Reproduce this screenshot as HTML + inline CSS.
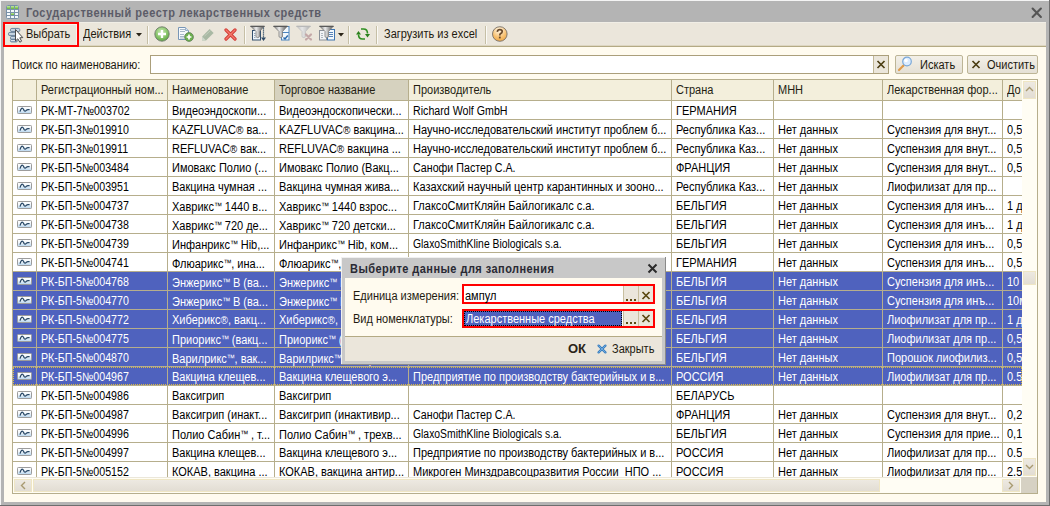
<!DOCTYPE html>
<html><head><meta charset="utf-8"><title>Реестр</title>
<style>
html,body{margin:0;padding:0;}
body{width:1050px;height:506px;overflow:hidden;position:relative;font-family:"Liberation Sans", sans-serif;font-size:11px;}
div{position:absolute;}
.t{white-space:nowrap;line-height:13px;font-size:12px;transform:scaleX(0.9167);transform-origin:0 0;}
.tb{white-space:nowrap;}
.tm{font-size:9px;letter-spacing:-0.6px;vertical-align:2px;}
.rg{font-size:11px;}
svg{display:block}
</style></head><body>
<div style="left:0px;top:0px;width:1050px;height:506px;background:#b4b4b4"></div>
<div style="left:0px;top:0px;width:1050px;height:1px;background:#f4f4f4"></div>
<div style="left:0px;top:0px;width:1px;height:506px;background:#f4f4f4"></div>
<div style="left:1049px;top:0px;width:1px;height:506px;background:#6e6e6e"></div>
<div style="left:0px;top:505px;width:1050px;height:1px;background:#6e6e6e"></div>
<svg style="position:absolute;left:6px;top:5px" width="13" height="14" viewBox="0 0 13 14">
<defs><linearGradient id="tg" x1="0" y1="0" x2="0" y2="1"><stop offset="0" stop-color="#c4eaa0"/><stop offset="1" stop-color="#66b436"/></linearGradient></defs>
<rect x="0.5" y="0.5" width="12" height="13" rx="1" fill="#f4f8fc" stroke="#7890a8"/>
<rect x="1" y="1" width="11" height="3" fill="url(#tg)"/>
<rect x="5" y="8" width="3" height="2" fill="url(#tg)"/>
<g stroke="#7a92aa" stroke-width="1"><line x1="1" y1="4.5" x2="12" y2="4.5"/><line x1="1" y1="7.5" x2="12" y2="7.5"/><line x1="1" y1="10.5" x2="12" y2="10.5"/>
<line x1="4.5" y1="1" x2="4.5" y2="13"/><line x1="8.5" y1="1" x2="8.5" y2="13"/></g>
</svg>
<div class="tb" style="left:26px;top:6px;font-weight:bold;font-size:11px;letter-spacing:0.53px;color:#5c5c68;line-height:14px;transform:scaleY(1.1);transform-origin:0 11px">Государственный реестр лекарственных средств</div>
<svg style="position:absolute;left:1031px;top:7px" width="12" height="12" viewBox="0 0 12 12"><path d="M1.6 1.6 L9.9 9.9 M9.9 1.6 L1.6 9.9" stroke="#555555" stroke-width="2.1" stroke-linecap="round"/></svg>
<div style="left:4px;top:22px;width:1042px;height:24px;background:#ebe6db"></div>
<div style="left:4px;top:22px;width:1042px;height:1px;background:#f1eee6"></div>
<div style="left:4px;top:45px;width:1042px;height:1px;background:#ddd6c2"></div>
<div style="left:4px;top:46px;width:1042px;height:1px;background:#b4aa84"></div>
<div style="left:4px;top:47px;width:1042px;height:455px;background:#fffbef"></div>
<div style="left:3px;top:22px;width:76px;height:25px;border:2px solid #ff0000;box-sizing:border-box"></div>
<div style="left:5px;top:24px;width:72px;height:1px;background:#f6f8f0"></div>
<div style="left:76px;top:24px;width:1px;height:21px;background:#f6f4ec"></div>
<svg style="position:absolute;left:4px;top:24px" width="24" height="22" viewBox="0 0 24 22">
<defs><linearGradient id="bar" x1="0" y1="0" x2="0" y2="1"><stop offset="0" stop-color="#7f9cb8"/><stop offset="0.5" stop-color="#e6eff7"/><stop offset="1" stop-color="#6f8ca8"/></linearGradient></defs>
<g fill="url(#bar)" stroke="#5d7a96" stroke-width="0.8">
<rect x="6.4" y="4.4" width="9.5" height="3.2" rx="1.5"/>
<rect x="4.4" y="8.4" width="9" height="3.2" rx="1.5"/>
<rect x="6.4" y="12.4" width="7" height="3" rx="1.4"/>
<rect x="6.4" y="15.4" width="7" height="2.6" rx="1.3"/>
</g>
<path d="M11.5 5.5 L11.5 17 L13.8 14.8 L15.8 18.2 L17.6 17.2 L15.8 13.8 L18.8 13.6 Z" fill="#ffffff" stroke="#4a4a4a" stroke-width="1" stroke-linejoin="round"/>
</svg>
<div class="t" style="left:26px;top:28px;color:#1e1a10">Выбрать</div>
<div class="t" style="left:83px;top:28px;color:#1e1a10">Действия</div>
<svg style="position:absolute;left:136px;top:33px" width="6" height="4"><path d="M0 0 L6 0 L3 3.5 Z" fill="#2a2418"/></svg>
<div style="left:147px;top:26px;width:1px;height:18px;background:#c6bfa6"></div>
<div style="left:148px;top:26px;width:1px;height:18px;background:#fbfaf6"></div>
<svg style="position:absolute;left:154px;top:26px" width="16" height="16" viewBox="0 0 16 16">
<defs><radialGradient id="gp" cx="0.45" cy="0.35" r="0.75"><stop offset="0" stop-color="#c9eab4"/><stop offset="0.55" stop-color="#88c56a"/><stop offset="1" stop-color="#4f9a36"/></radialGradient></defs>
<circle cx="8" cy="8" r="7.2" fill="url(#gp)" stroke="#6e7a6c" stroke-width="0.9"/>
<path d="M8 4 V12 M4 8 H12" stroke="#ffffff" stroke-width="2.3"/>
</svg>
<svg style="position:absolute;left:178px;top:27px" width="16" height="15" viewBox="0 0 16 15">
<path d="M0.5 0.5 H7.5 L10.5 3.5 V12.5 H0.5 Z" fill="#f6f9fc" stroke="#7896b6"/>
<path d="M7.5 0.5 V3.5 H10.5" fill="#d6e2ee" stroke="#9ab0c8"/>
<g stroke="#a8b8c8"><line x1="2" y1="2.5" x2="7" y2="2.5"/><line x1="2" y1="4.5" x2="7" y2="4.5"/><line x1="2" y1="7.5" x2="6" y2="7.5"/><line x1="2" y1="9.5" x2="6" y2="9.5"/><line x1="2" y1="11" x2="6" y2="11"/></g>
<circle cx="11" cy="10" r="4.4" fill="#6cb04e" stroke="#5f7f58" stroke-width="0.8"/>
<path d="M11 7.6 V12.4 M8.6 10 H13.4" stroke="#fff" stroke-width="1.7"/>
</svg>
<svg style="position:absolute;left:201px;top:27px" width="14" height="15" viewBox="0 0 14 15">
<path d="M1 13.5 L1.2 9.5 L8.6 2 L12.6 6 L5 13.5 Z" fill="#a9b9a4"/>
<path d="M1 13.5 L1.2 9.5 L5 13.5 Z" fill="#cfd8cc"/>
<path d="M3.5 9 L9.5 3.5" stroke="#c2cebe" stroke-width="1"/>
</svg>
<svg style="position:absolute;left:224px;top:28px" width="13" height="13" viewBox="0 0 13 13">
<path d="M2 2 L11 11 M11 2 L2 11" stroke="#d23a34" stroke-width="3.2" stroke-linecap="round"/>
<path d="M2 2 L11 11 M11 2 L2 11" stroke="#f37a6c" stroke-width="1.4" stroke-linecap="round"/>
</svg>
<div style="left:244px;top:26px;width:1px;height:18px;background:#c6bfa6"></div>
<div style="left:245px;top:26px;width:1px;height:18px;background:#fbfaf6"></div>
<svg style="position:absolute;left:248px;top:24px" width="22" height="20" viewBox="0 0 22 20">
<rect x="4.5" y="6.5" width="8" height="9.5" fill="#eef5fb" stroke="#34506e"/>
<g fill="#9aa8b8"><rect x="6" y="9" width="1.5" height="1"/><rect x="6" y="11" width="1.5" height="1"/><rect x="6" y="13" width="1.5" height="1"/></g>
<defs><linearGradient id="fg1" x1="0" y1="0" x2="1" y2="0"><stop offset="0" stop-color="#6a6a6a"/><stop offset="0.4" stop-color="#ececec"/><stop offset="0.65" stop-color="#a8a8a8"/><stop offset="1" stop-color="#505050"/></linearGradient></defs>
<path d="M2.5 2 H16.5 L11.5 7.5 V12.8 Q9.75 14.5 8.0 12.8 V7.5 Z" fill="url(#fg1)" stroke="#7a7a7a" stroke-width="0.8"/>
<path d="M2.5 2.5 H16.5" stroke="#5a5a5a" stroke-width="1"/>
<path d="M15.5 3.5 V14" stroke="#2e4a66" stroke-width="1.2" stroke-dasharray="1.2 0.8"/>
<path d="M13 13.5 H18 L15.5 17 Z" fill="#2e4a66"/>
</svg>
<svg style="position:absolute;left:271px;top:24px" width="22" height="20" viewBox="0 0 22 20">
<rect x="10.5" y="2.5" width="7.5" height="13.5" fill="#f2f8fd" stroke="#4a84c0"/>
<path d="M11 8.5 H18" stroke="#4a84c0"/>
<defs><linearGradient id="fg2" x1="0" y1="0" x2="1" y2="0"><stop offset="0" stop-color="#6a6a6a"/><stop offset="0.4" stop-color="#ececec"/><stop offset="0.65" stop-color="#a8a8a8"/><stop offset="1" stop-color="#505050"/></linearGradient></defs>
<path d="M2.5 2 H16.5 L11.5 7.5 V12.8 Q9.75 14.5 8.0 12.8 V7.5 Z" fill="url(#fg2)" stroke="#7a7a7a" stroke-width="0.8"/>
<path d="M2.5 2.5 H16.5" stroke="#5a5a5a" stroke-width="1"/>
<path d="M12.5 13.5 L14 15 L16.8 11.5" stroke="#2a6aae" stroke-width="1.5" fill="none"/>
</svg>
<svg style="position:absolute;left:294px;top:24px" width="22" height="20" viewBox="0 0 22 20">
<defs><linearGradient id="fg3" x1="0" y1="0" x2="1" y2="0"><stop offset="0" stop-color="#c0c0c0"/><stop offset="0.4" stop-color="#e6e6e6"/><stop offset="0.65" stop-color="#d0d0d0"/><stop offset="1" stop-color="#a8a8a8"/></linearGradient></defs>
<path d="M2.5 2 H16.5 L11.5 7.5 V12.8 Q9.75 14.5 8.0 12.8 V7.5 Z" fill="url(#fg3)" stroke="#c0c0c0" stroke-width="0.8"/>
<path d="M2.5 2.5 H16.5" stroke="#b8b8b8" stroke-width="1"/>
<path d="M12 10.5 L17 15.5 M17 10.5 L12 15.5" stroke="#c4a8a8" stroke-width="2.2" stroke-linecap="round"/>
</svg>
<svg style="position:absolute;left:317px;top:24px" width="22" height="20" viewBox="0 0 22 20">
<rect x="2.5" y="6.5" width="7" height="9.5" fill="#f2f4f6" stroke="#8a9098"/>
<g fill="#b0b8c0"><rect x="4" y="9" width="2" height="1"/><rect x="4" y="11" width="2" height="1"/><rect x="4" y="13" width="2" height="1"/></g>
<rect x="10.5" y="5.5" width="7" height="10.5" fill="#f2f8fd" stroke="#3e74b0"/>
<g fill="#5a84b8"><rect x="12" y="8" width="4" height="1"/><rect x="12" y="10" width="4" height="1"/><rect x="12" y="12" width="4" height="1"/></g>
<defs><linearGradient id="fg4" x1="0" y1="0" x2="1" y2="0"><stop offset="0" stop-color="#6a6a6a"/><stop offset="0.4" stop-color="#ececec"/><stop offset="0.65" stop-color="#a8a8a8"/><stop offset="1" stop-color="#505050"/></linearGradient></defs>
<path d="M2.5 2 H16.5 L11.5 7.5 V12.8 Q9.75 14.5 8.0 12.8 V7.5 Z" fill="url(#fg4)" stroke="#7a7a7a" stroke-width="0.8"/>
<path d="M2.5 2.5 H16.5" stroke="#5a5a5a" stroke-width="1"/>
</svg>
<svg style="position:absolute;left:338px;top:33px" width="6" height="4"><path d="M0 0 L6 0 L3 3.5 Z" fill="#2a2418"/></svg>
<div style="left:348px;top:26px;width:1px;height:18px;background:#c6bfa6"></div>
<div style="left:349px;top:26px;width:1px;height:18px;background:#fbfaf6"></div>
<svg style="position:absolute;left:354px;top:27px" width="18" height="15" viewBox="0 0 18 15">
<path d="M7 2 H9.5 Q13.5 2 13.5 6.5" stroke="#2f8f22" stroke-width="1.6" fill="none"/>
<path d="M11 7 H16 L13.5 10.5 Z" fill="#2a7f1c"/>
<path d="M11 12 H8.5 Q4.5 12 4.5 7.5" stroke="#2f8f22" stroke-width="1.6" fill="none"/>
<path d="M2 7.5 H7 L4.5 4 Z" fill="#2a7f1c"/>
</svg>
<div style="left:376px;top:26px;width:1px;height:18px;background:#c6bfa6"></div>
<div style="left:377px;top:26px;width:1px;height:18px;background:#fbfaf6"></div>
<div class="t" style="left:384px;top:28px;color:#1e1a10">Загрузить из excel</div>
<div style="left:485px;top:26px;width:1px;height:18px;background:#c6bfa6"></div>
<div style="left:486px;top:26px;width:1px;height:18px;background:#fbfaf6"></div>
<svg style="position:absolute;left:491px;top:26px" width="17" height="16" viewBox="0 0 17 16">
<defs><radialGradient id="hg" cx="0.45" cy="0.25" r="0.8"><stop offset="0" stop-color="#fff8ea"/><stop offset="0.6" stop-color="#f8c272"/><stop offset="1" stop-color="#eba444"/></radialGradient></defs>
<circle cx="8.8" cy="8" r="7.3" fill="url(#hg)" stroke="#77706a" stroke-width="0.9"/>
<path d="M6.3 5.8 Q6.5 3.6 8.8 3.6 Q11.2 3.6 11.2 5.6 Q11.2 7 9.6 7.6 Q8.8 8 8.8 9.4" stroke="#6a4a2a" stroke-width="1.7" fill="none"/>
<rect x="7.9" y="10.6" width="1.8" height="1.8" fill="#6a4a2a"/>
</svg>
<div class="t" style="left:12px;top:59px;color:#1e1a10">Поиск по наименованию:</div>
<div style="left:150px;top:55px;width:739px;height:19px;background:#fff;border:1px solid #ab9f7b;box-sizing:border-box"></div>
<div style="left:873px;top:56px;width:15px;height:17px;background:#ebe6db;border-left:1px solid #c1b796;box-sizing:border-box"></div>
<svg style="position:absolute;left:876px;top:60px" width="10" height="9" viewBox="0 0 10 9"><path d="M1.5 1 L8.5 8 M8.5 1 L1.5 8" stroke="#4c3e14" stroke-width="1.7"/></svg>
<div style="left:895px;top:55px;width:68px;height:19px;border:1px solid #bdb596;border-radius:2px;box-sizing:border-box;background:linear-gradient(#f3f0e8,#e5e0d5)"></div>
<svg style="position:absolute;left:897px;top:56px" width="16" height="16" viewBox="0 0 16 16">
<path d="M2 14 L6.5 9.5" stroke="#e09a4a" stroke-width="2.2" stroke-linecap="round"/>
<circle cx="10" cy="5.5" r="4.3" fill="#dcecff" stroke="#7aa8d8" stroke-width="1.2"/>
<circle cx="9" cy="4.5" r="1.8" fill="#ffffff"/>
</svg>
<div class="t" style="left:920px;top:59px;color:#1e1a10">Искать</div>
<div style="left:967px;top:55px;width:71px;height:19px;border:1px solid #bdb596;border-radius:2px;box-sizing:border-box;background:linear-gradient(#f3f0e8,#e5e0d5)"></div>
<svg style="position:absolute;left:971px;top:60px" width="10" height="9" viewBox="0 0 10 9"><path d="M1.5 1 L8.5 8 M8.5 1 L1.5 8" stroke="#4c3e14" stroke-width="1.7"/></svg>
<div class="t" style="left:987px;top:59px;color:#1e1a10">Очистить</div>
<div style="left:12px;top:79px;width:1026px;height:415px;background:#fffdf4"></div>
<div style="left:13px;top:80px;width:1009px;height:20px;background:#f3efdc"></div>
<div style="left:275px;top:80px;width:133px;height:20px;background:#d6d2bf"></div>
<div style="left:13px;top:101px;width:1009px;height:376px;overflow:hidden">
<div style="left:0px;top:0px;width:1009px;height:18px;background:#ffffff"></div>
<svg style="position:absolute;left:4px;top:5px" width="15" height="8" viewBox="0 0 15 8">
<defs><linearGradient id="ig0" x1="0" y1="0" x2="0" y2="1"><stop offset="0" stop-color="#ffffff"/><stop offset="0.45" stop-color="#f0f6fb"/><stop offset="1" stop-color="#b4d4ee"/></linearGradient></defs>
<rect x="0.5" y="0.5" width="14" height="7" rx="0.8" fill="url(#ig0)" stroke="#9c9c9c"/>
<path d="M3 5.6 Q4.4 1.2 5.8 2.4 Q6.4 3 7.2 4.6 Q8 5.7 9.3 4.4 Q10 3.6 11 3.6 H12.6" stroke="#274766" stroke-width="1.3" fill="none"/>
</svg>
<div class="t" style="left:28px;top:4px;color:#000000;transform:scaleX(0.887)">РК-МТ-7№003702</div>
<div class="t" style="left:159px;top:4px;color:#000000">Видеоэндоскопи...</div>
<div class="t" style="left:266px;top:4px;color:#000000">Видеоэндоскопически...</div>
<div class="t" style="left:400px;top:4px;color:#000000;transform:scaleX(0.888)">Richard Wolf GmbH</div>
<div class="t" style="left:663px;top:4px;color:#000000">ГЕРМАНИЯ</div>
<div style="left:0px;top:18px;width:1009px;height:1px;background:#b6ae8c"></div>
<div style="left:0px;top:19px;width:1009px;height:18px;background:#ffffff"></div>
<svg style="position:absolute;left:4px;top:24px" width="15" height="8" viewBox="0 0 15 8">
<defs><linearGradient id="ig1" x1="0" y1="0" x2="0" y2="1"><stop offset="0" stop-color="#ffffff"/><stop offset="0.45" stop-color="#f0f6fb"/><stop offset="1" stop-color="#b4d4ee"/></linearGradient></defs>
<rect x="0.5" y="0.5" width="14" height="7" rx="0.8" fill="url(#ig1)" stroke="#9c9c9c"/>
<path d="M3 5.6 Q4.4 1.2 5.8 2.4 Q6.4 3 7.2 4.6 Q8 5.7 9.3 4.4 Q10 3.6 11 3.6 H12.6" stroke="#274766" stroke-width="1.3" fill="none"/>
</svg>
<div class="t" style="left:28px;top:23px;color:#000000;transform:scaleX(0.887)">РК-БП-3№019910</div>
<div class="t" style="left:159px;top:23px;color:#000000">KAZFLUVAC<span class="rg">®</span> ва...</div>
<div class="t" style="left:266px;top:23px;color:#000000">KAZFLUVAC<span class="rg">®</span> вакцина...</div>
<div class="t" style="left:400px;top:23px;color:#000000">Научно-исследовательский институт проблем б...</div>
<div class="t" style="left:663px;top:23px;color:#000000">Республика Каз...</div>
<div class="t" style="left:765px;top:23px;color:#000000">Нет данных</div>
<div class="t" style="left:874px;top:23px;color:#000000">Суспензия для внут...</div>
<div class="t" style="left:994px;top:23px;color:#000000">0,5</div>
<div style="left:0px;top:37px;width:1009px;height:1px;background:#b6ae8c"></div>
<div style="left:0px;top:38px;width:1009px;height:18px;background:#ffffff"></div>
<svg style="position:absolute;left:4px;top:43px" width="15" height="8" viewBox="0 0 15 8">
<defs><linearGradient id="ig2" x1="0" y1="0" x2="0" y2="1"><stop offset="0" stop-color="#ffffff"/><stop offset="0.45" stop-color="#f0f6fb"/><stop offset="1" stop-color="#b4d4ee"/></linearGradient></defs>
<rect x="0.5" y="0.5" width="14" height="7" rx="0.8" fill="url(#ig2)" stroke="#9c9c9c"/>
<path d="M3 5.6 Q4.4 1.2 5.8 2.4 Q6.4 3 7.2 4.6 Q8 5.7 9.3 4.4 Q10 3.6 11 3.6 H12.6" stroke="#274766" stroke-width="1.3" fill="none"/>
</svg>
<div class="t" style="left:28px;top:42px;color:#000000;transform:scaleX(0.887)">РК-БП-3№019911</div>
<div class="t" style="left:159px;top:42px;color:#000000">REFLUVAC<span class="rg">®</span> вак...</div>
<div class="t" style="left:266px;top:42px;color:#000000">REFLUVAC<span class="rg">®</span> вакцина ...</div>
<div class="t" style="left:400px;top:42px;color:#000000">Научно-исследовательский институт проблем б...</div>
<div class="t" style="left:663px;top:42px;color:#000000">Республика Каз...</div>
<div class="t" style="left:765px;top:42px;color:#000000">Нет данных</div>
<div class="t" style="left:874px;top:42px;color:#000000">Суспензия для внут...</div>
<div class="t" style="left:994px;top:42px;color:#000000">0,5</div>
<div style="left:0px;top:56px;width:1009px;height:1px;background:#b6ae8c"></div>
<div style="left:0px;top:57px;width:1009px;height:18px;background:#ffffff"></div>
<svg style="position:absolute;left:4px;top:62px" width="15" height="8" viewBox="0 0 15 8">
<defs><linearGradient id="ig3" x1="0" y1="0" x2="0" y2="1"><stop offset="0" stop-color="#ffffff"/><stop offset="0.45" stop-color="#f0f6fb"/><stop offset="1" stop-color="#b4d4ee"/></linearGradient></defs>
<rect x="0.5" y="0.5" width="14" height="7" rx="0.8" fill="url(#ig3)" stroke="#9c9c9c"/>
<path d="M3 5.6 Q4.4 1.2 5.8 2.4 Q6.4 3 7.2 4.6 Q8 5.7 9.3 4.4 Q10 3.6 11 3.6 H12.6" stroke="#274766" stroke-width="1.3" fill="none"/>
</svg>
<div class="t" style="left:28px;top:61px;color:#000000;transform:scaleX(0.887)">РК-БП-5№003484</div>
<div class="t" style="left:159px;top:61px;color:#000000">Имовакс Полио (...</div>
<div class="t" style="left:266px;top:61px;color:#000000">Имовакс Полио (Вакц...</div>
<div class="t" style="left:400px;top:61px;color:#000000;transform:scaleX(0.889)">Санофи Пастер С.А.</div>
<div class="t" style="left:663px;top:61px;color:#000000">ФРАНЦИЯ</div>
<div class="t" style="left:765px;top:61px;color:#000000">Нет данных</div>
<div class="t" style="left:874px;top:61px;color:#000000">Суспензия для внут...</div>
<div class="t" style="left:994px;top:61px;color:#000000">0,5</div>
<div style="left:0px;top:75px;width:1009px;height:1px;background:#b6ae8c"></div>
<div style="left:0px;top:76px;width:1009px;height:18px;background:#ffffff"></div>
<svg style="position:absolute;left:4px;top:81px" width="15" height="8" viewBox="0 0 15 8">
<defs><linearGradient id="ig4" x1="0" y1="0" x2="0" y2="1"><stop offset="0" stop-color="#ffffff"/><stop offset="0.45" stop-color="#f0f6fb"/><stop offset="1" stop-color="#b4d4ee"/></linearGradient></defs>
<rect x="0.5" y="0.5" width="14" height="7" rx="0.8" fill="url(#ig4)" stroke="#9c9c9c"/>
<path d="M3 5.6 Q4.4 1.2 5.8 2.4 Q6.4 3 7.2 4.6 Q8 5.7 9.3 4.4 Q10 3.6 11 3.6 H12.6" stroke="#274766" stroke-width="1.3" fill="none"/>
</svg>
<div class="t" style="left:28px;top:80px;color:#000000;transform:scaleX(0.887)">РК-БП-5№003951</div>
<div class="t" style="left:159px;top:80px;color:#000000">Вакцина чумная ...</div>
<div class="t" style="left:266px;top:80px;color:#000000">Вакцина чумная жива...</div>
<div class="t" style="left:400px;top:80px;color:#000000">Казахский научный центр карантинных и зооно...</div>
<div class="t" style="left:663px;top:80px;color:#000000">Республика Каз...</div>
<div class="t" style="left:765px;top:80px;color:#000000">Нет данных</div>
<div class="t" style="left:874px;top:80px;color:#000000">Лиофилизат для пр...</div>
<div style="left:0px;top:94px;width:1009px;height:1px;background:#b6ae8c"></div>
<div style="left:0px;top:95px;width:1009px;height:18px;background:#ffffff"></div>
<svg style="position:absolute;left:4px;top:100px" width="15" height="8" viewBox="0 0 15 8">
<defs><linearGradient id="ig5" x1="0" y1="0" x2="0" y2="1"><stop offset="0" stop-color="#ffffff"/><stop offset="0.45" stop-color="#f0f6fb"/><stop offset="1" stop-color="#b4d4ee"/></linearGradient></defs>
<rect x="0.5" y="0.5" width="14" height="7" rx="0.8" fill="url(#ig5)" stroke="#9c9c9c"/>
<path d="M3 5.6 Q4.4 1.2 5.8 2.4 Q6.4 3 7.2 4.6 Q8 5.7 9.3 4.4 Q10 3.6 11 3.6 H12.6" stroke="#274766" stroke-width="1.3" fill="none"/>
</svg>
<div class="t" style="left:28px;top:99px;color:#000000;transform:scaleX(0.887)">РК-БП-5№004737</div>
<div class="t" style="left:159px;top:99px;color:#000000">Хаврикс<span class="tm">™</span> 1440 в...</div>
<div class="t" style="left:266px;top:99px;color:#000000">Хаврикс<span class="tm">™</span> 1440 взрос...</div>
<div class="t" style="left:400px;top:99px;color:#000000">ГлаксоСмитКляйн Байлогикалс с.а.</div>
<div class="t" style="left:663px;top:99px;color:#000000">БЕЛЬГИЯ</div>
<div class="t" style="left:765px;top:99px;color:#000000">Нет данных</div>
<div class="t" style="left:874px;top:99px;color:#000000">Суспензия для инъ...</div>
<div class="t" style="left:994px;top:99px;color:#000000">1 д</div>
<div style="left:0px;top:113px;width:1009px;height:1px;background:#b6ae8c"></div>
<div style="left:0px;top:114px;width:1009px;height:18px;background:#ffffff"></div>
<svg style="position:absolute;left:4px;top:119px" width="15" height="8" viewBox="0 0 15 8">
<defs><linearGradient id="ig6" x1="0" y1="0" x2="0" y2="1"><stop offset="0" stop-color="#ffffff"/><stop offset="0.45" stop-color="#f0f6fb"/><stop offset="1" stop-color="#b4d4ee"/></linearGradient></defs>
<rect x="0.5" y="0.5" width="14" height="7" rx="0.8" fill="url(#ig6)" stroke="#9c9c9c"/>
<path d="M3 5.6 Q4.4 1.2 5.8 2.4 Q6.4 3 7.2 4.6 Q8 5.7 9.3 4.4 Q10 3.6 11 3.6 H12.6" stroke="#274766" stroke-width="1.3" fill="none"/>
</svg>
<div class="t" style="left:28px;top:118px;color:#000000;transform:scaleX(0.887)">РК-БП-5№004738</div>
<div class="t" style="left:159px;top:118px;color:#000000">Хаврикс<span class="tm">™</span> 720 де...</div>
<div class="t" style="left:266px;top:118px;color:#000000">Хаврикс<span class="tm">™</span> 720 детски...</div>
<div class="t" style="left:400px;top:118px;color:#000000">ГлаксоСмитКляйн Байлогикалс с.а.</div>
<div class="t" style="left:663px;top:118px;color:#000000">БЕЛЬГИЯ</div>
<div class="t" style="left:765px;top:118px;color:#000000">Нет данных</div>
<div class="t" style="left:874px;top:118px;color:#000000">Суспензия для инъ...</div>
<div class="t" style="left:994px;top:118px;color:#000000">1 д</div>
<div style="left:0px;top:132px;width:1009px;height:1px;background:#b6ae8c"></div>
<div style="left:0px;top:133px;width:1009px;height:18px;background:#ffffff"></div>
<svg style="position:absolute;left:4px;top:138px" width="15" height="8" viewBox="0 0 15 8">
<defs><linearGradient id="ig7" x1="0" y1="0" x2="0" y2="1"><stop offset="0" stop-color="#ffffff"/><stop offset="0.45" stop-color="#f0f6fb"/><stop offset="1" stop-color="#b4d4ee"/></linearGradient></defs>
<rect x="0.5" y="0.5" width="14" height="7" rx="0.8" fill="url(#ig7)" stroke="#9c9c9c"/>
<path d="M3 5.6 Q4.4 1.2 5.8 2.4 Q6.4 3 7.2 4.6 Q8 5.7 9.3 4.4 Q10 3.6 11 3.6 H12.6" stroke="#274766" stroke-width="1.3" fill="none"/>
</svg>
<div class="t" style="left:28px;top:137px;color:#000000;transform:scaleX(0.887)">РК-БП-5№004739</div>
<div class="t" style="left:159px;top:137px;color:#000000">Инфанрикс<span class="tm">™</span> Hib,...</div>
<div class="t" style="left:266px;top:137px;color:#000000">Инфанрикс<span class="tm">™</span> Hib, ком...</div>
<div class="t" style="left:400px;top:137px;color:#000000;transform:scaleX(0.864)">GlaxoSmithKline Biologicals s.a.</div>
<div class="t" style="left:663px;top:137px;color:#000000">БЕЛЬГИЯ</div>
<div class="t" style="left:765px;top:137px;color:#000000">Нет данных</div>
<div class="t" style="left:874px;top:137px;color:#000000">Суспензия для инъ...</div>
<div class="t" style="left:994px;top:137px;color:#000000">0,5</div>
<div style="left:0px;top:151px;width:1009px;height:1px;background:#b6ae8c"></div>
<div style="left:0px;top:152px;width:1009px;height:18px;background:#ffffff"></div>
<svg style="position:absolute;left:4px;top:157px" width="15" height="8" viewBox="0 0 15 8">
<defs><linearGradient id="ig8" x1="0" y1="0" x2="0" y2="1"><stop offset="0" stop-color="#ffffff"/><stop offset="0.45" stop-color="#f0f6fb"/><stop offset="1" stop-color="#b4d4ee"/></linearGradient></defs>
<rect x="0.5" y="0.5" width="14" height="7" rx="0.8" fill="url(#ig8)" stroke="#9c9c9c"/>
<path d="M3 5.6 Q4.4 1.2 5.8 2.4 Q6.4 3 7.2 4.6 Q8 5.7 9.3 4.4 Q10 3.6 11 3.6 H12.6" stroke="#274766" stroke-width="1.3" fill="none"/>
</svg>
<div class="t" style="left:28px;top:156px;color:#000000;transform:scaleX(0.887)">РК-БП-5№004741</div>
<div class="t" style="left:159px;top:156px;color:#000000">Флюарикс<span class="tm">™</span>, ина...</div>
<div class="t" style="left:266px;top:156px;color:#000000">Флюарикс<span class="tm">™</span>, инактив...</div>
<div class="t" style="left:400px;top:156px;color:#000000;transform:scaleX(0.864)">GlaxoSmithKline Biologicals s.a.</div>
<div class="t" style="left:663px;top:156px;color:#000000">ГЕРМАНИЯ</div>
<div class="t" style="left:765px;top:156px;color:#000000">Нет данных</div>
<div class="t" style="left:874px;top:156px;color:#000000">Суспензия для инъ...</div>
<div class="t" style="left:994px;top:156px;color:#000000">0,5</div>
<div style="left:0px;top:170px;width:1009px;height:1px;background:#b6ae8c"></div>
<div style="left:0px;top:171px;width:1009px;height:18px;background:#4f62be"></div>
<svg style="position:absolute;left:4px;top:176px" width="15" height="8" viewBox="0 0 15 8">
<defs><linearGradient id="ig9" x1="0" y1="0" x2="0" y2="1"><stop offset="0" stop-color="#ffffff"/><stop offset="0.45" stop-color="#f0f6fb"/><stop offset="1" stop-color="#b4d4ee"/></linearGradient></defs>
<rect x="0.5" y="0.5" width="14" height="7" rx="0.8" fill="url(#ig9)" stroke="#9c9c9c"/>
<path d="M3 5.6 Q4.4 1.2 5.8 2.4 Q6.4 3 7.2 4.6 Q8 5.7 9.3 4.4 Q10 3.6 11 3.6 H12.6" stroke="#274766" stroke-width="1.3" fill="none"/>
</svg>
<div class="t" style="left:28px;top:175px;color:#ffffff;transform:scaleX(0.887)">РК-БП-5№004768</div>
<div class="t" style="left:159px;top:175px;color:#ffffff">Энжерикс<span class="tm">™</span> В (ва...</div>
<div class="t" style="left:266px;top:175px;color:#ffffff">Энжерикс<span class="tm">™</span> В (вакци...</div>
<div class="t" style="left:400px;top:175px;color:#ffffff;transform:scaleX(0.864)">GlaxoSmithKline Biologicals s.a.</div>
<div class="t" style="left:663px;top:175px;color:#ffffff">БЕЛЬГИЯ</div>
<div class="t" style="left:765px;top:175px;color:#ffffff">Нет данных</div>
<div class="t" style="left:874px;top:175px;color:#ffffff">Суспензия для инъ...</div>
<div class="t" style="left:994px;top:175px;color:#ffffff">10</div>
<div style="left:0px;top:189px;width:1009px;height:1px;background:#b6ae8c"></div>
<div style="left:0px;top:190px;width:1009px;height:18px;background:#4f62be"></div>
<svg style="position:absolute;left:4px;top:195px" width="15" height="8" viewBox="0 0 15 8">
<defs><linearGradient id="ig10" x1="0" y1="0" x2="0" y2="1"><stop offset="0" stop-color="#ffffff"/><stop offset="0.45" stop-color="#f0f6fb"/><stop offset="1" stop-color="#b4d4ee"/></linearGradient></defs>
<rect x="0.5" y="0.5" width="14" height="7" rx="0.8" fill="url(#ig10)" stroke="#9c9c9c"/>
<path d="M3 5.6 Q4.4 1.2 5.8 2.4 Q6.4 3 7.2 4.6 Q8 5.7 9.3 4.4 Q10 3.6 11 3.6 H12.6" stroke="#274766" stroke-width="1.3" fill="none"/>
</svg>
<div class="t" style="left:28px;top:194px;color:#ffffff;transform:scaleX(0.887)">РК-БП-5№004770</div>
<div class="t" style="left:159px;top:194px;color:#ffffff">Энжерикс<span class="tm">™</span> В (ва...</div>
<div class="t" style="left:266px;top:194px;color:#ffffff">Энжерикс<span class="tm">™</span> В (вакци...</div>
<div class="t" style="left:400px;top:194px;color:#ffffff;transform:scaleX(0.864)">GlaxoSmithKline Biologicals s.a.</div>
<div class="t" style="left:663px;top:194px;color:#ffffff">БЕЛЬГИЯ</div>
<div class="t" style="left:765px;top:194px;color:#ffffff">Нет данных</div>
<div class="t" style="left:874px;top:194px;color:#ffffff">Суспензия для инъ...</div>
<div class="t" style="left:994px;top:194px;color:#ffffff">10м</div>
<div style="left:0px;top:208px;width:1009px;height:1px;background:#b6ae8c"></div>
<div style="left:0px;top:209px;width:1009px;height:18px;background:#4f62be"></div>
<svg style="position:absolute;left:4px;top:214px" width="15" height="8" viewBox="0 0 15 8">
<defs><linearGradient id="ig11" x1="0" y1="0" x2="0" y2="1"><stop offset="0" stop-color="#ffffff"/><stop offset="0.45" stop-color="#f0f6fb"/><stop offset="1" stop-color="#b4d4ee"/></linearGradient></defs>
<rect x="0.5" y="0.5" width="14" height="7" rx="0.8" fill="url(#ig11)" stroke="#9c9c9c"/>
<path d="M3 5.6 Q4.4 1.2 5.8 2.4 Q6.4 3 7.2 4.6 Q8 5.7 9.3 4.4 Q10 3.6 11 3.6 H12.6" stroke="#274766" stroke-width="1.3" fill="none"/>
</svg>
<div class="t" style="left:28px;top:213px;color:#ffffff;transform:scaleX(0.887)">РК-БП-5№004772</div>
<div class="t" style="left:159px;top:213px;color:#ffffff">Хиберикс<span class="rg">®</span>, вакц...</div>
<div class="t" style="left:266px;top:213px;color:#ffffff">Хиберикс<span class="rg">®</span>, вакцина...</div>
<div class="t" style="left:400px;top:213px;color:#ffffff;transform:scaleX(0.864)">GlaxoSmithKline Biologicals s.a.</div>
<div class="t" style="left:663px;top:213px;color:#ffffff">БЕЛЬГИЯ</div>
<div class="t" style="left:765px;top:213px;color:#ffffff">Нет данных</div>
<div class="t" style="left:874px;top:213px;color:#ffffff">Лиофилизат для пр...</div>
<div class="t" style="left:994px;top:213px;color:#ffffff">1 д</div>
<div style="left:0px;top:227px;width:1009px;height:1px;background:#b6ae8c"></div>
<div style="left:0px;top:228px;width:1009px;height:18px;background:#4f62be"></div>
<svg style="position:absolute;left:4px;top:233px" width="15" height="8" viewBox="0 0 15 8">
<defs><linearGradient id="ig12" x1="0" y1="0" x2="0" y2="1"><stop offset="0" stop-color="#ffffff"/><stop offset="0.45" stop-color="#f0f6fb"/><stop offset="1" stop-color="#b4d4ee"/></linearGradient></defs>
<rect x="0.5" y="0.5" width="14" height="7" rx="0.8" fill="url(#ig12)" stroke="#9c9c9c"/>
<path d="M3 5.6 Q4.4 1.2 5.8 2.4 Q6.4 3 7.2 4.6 Q8 5.7 9.3 4.4 Q10 3.6 11 3.6 H12.6" stroke="#274766" stroke-width="1.3" fill="none"/>
</svg>
<div class="t" style="left:28px;top:232px;color:#ffffff;transform:scaleX(0.887)">РК-БП-5№004775</div>
<div class="t" style="left:159px;top:232px;color:#ffffff">Приорикс<span class="tm">™</span> (вакц...</div>
<div class="t" style="left:266px;top:232px;color:#ffffff">Приорикс<span class="tm">™</span> (вакцина...</div>
<div class="t" style="left:400px;top:232px;color:#ffffff;transform:scaleX(0.864)">GlaxoSmithKline Biologicals s.a.</div>
<div class="t" style="left:663px;top:232px;color:#ffffff">БЕЛЬГИЯ</div>
<div class="t" style="left:765px;top:232px;color:#ffffff">Нет данных</div>
<div class="t" style="left:874px;top:232px;color:#ffffff">Лиофилизат для пр...</div>
<div class="t" style="left:994px;top:232px;color:#ffffff">0,5</div>
<div style="left:0px;top:246px;width:1009px;height:1px;background:#b6ae8c"></div>
<div style="left:0px;top:247px;width:1009px;height:18px;background:#4f62be"></div>
<svg style="position:absolute;left:4px;top:252px" width="15" height="8" viewBox="0 0 15 8">
<defs><linearGradient id="ig13" x1="0" y1="0" x2="0" y2="1"><stop offset="0" stop-color="#ffffff"/><stop offset="0.45" stop-color="#f0f6fb"/><stop offset="1" stop-color="#b4d4ee"/></linearGradient></defs>
<rect x="0.5" y="0.5" width="14" height="7" rx="0.8" fill="url(#ig13)" stroke="#9c9c9c"/>
<path d="M3 5.6 Q4.4 1.2 5.8 2.4 Q6.4 3 7.2 4.6 Q8 5.7 9.3 4.4 Q10 3.6 11 3.6 H12.6" stroke="#274766" stroke-width="1.3" fill="none"/>
</svg>
<div class="t" style="left:28px;top:251px;color:#ffffff;transform:scaleX(0.887)">РК-БП-5№004870</div>
<div class="t" style="left:159px;top:251px;color:#ffffff">Варилрикс<span class="tm">™</span>, вак...</div>
<div class="t" style="left:266px;top:251px;color:#ffffff">Варилрикс<span class="tm">™</span>, вакцина...</div>
<div class="t" style="left:400px;top:251px;color:#ffffff;transform:scaleX(0.864)">GlaxoSmithKline Biologicals s.a.</div>
<div class="t" style="left:663px;top:251px;color:#ffffff">БЕЛЬГИЯ</div>
<div class="t" style="left:765px;top:251px;color:#ffffff">Нет данных</div>
<div class="t" style="left:874px;top:251px;color:#ffffff">Порошок лиофилиз...</div>
<div class="t" style="left:994px;top:251px;color:#ffffff">0,5</div>
<div style="left:0px;top:265px;width:1009px;height:1px;background:#b6ae8c"></div>
<div style="left:0px;top:266px;width:1009px;height:18px;background:#4f62be"></div>
<svg style="position:absolute;left:4px;top:271px" width="15" height="8" viewBox="0 0 15 8">
<defs><linearGradient id="ig14" x1="0" y1="0" x2="0" y2="1"><stop offset="0" stop-color="#ffffff"/><stop offset="0.45" stop-color="#f0f6fb"/><stop offset="1" stop-color="#b4d4ee"/></linearGradient></defs>
<rect x="0.5" y="0.5" width="14" height="7" rx="0.8" fill="url(#ig14)" stroke="#9c9c9c"/>
<path d="M3 5.6 Q4.4 1.2 5.8 2.4 Q6.4 3 7.2 4.6 Q8 5.7 9.3 4.4 Q10 3.6 11 3.6 H12.6" stroke="#274766" stroke-width="1.3" fill="none"/>
</svg>
<div class="t" style="left:28px;top:270px;color:#ffffff;transform:scaleX(0.887)">РК-БП-5№004967</div>
<div class="t" style="left:159px;top:270px;color:#ffffff">Вакцина клещев...</div>
<div class="t" style="left:266px;top:270px;color:#ffffff">Вакцина клещевого э...</div>
<div class="t" style="left:400px;top:270px;color:#ffffff">Предприятие по производству бактерийных и в...</div>
<div class="t" style="left:663px;top:270px;color:#ffffff">РОССИЯ</div>
<div class="t" style="left:765px;top:270px;color:#ffffff">Нет данных</div>
<div class="t" style="left:874px;top:270px;color:#ffffff">Лиофилизат для пр...</div>
<div class="t" style="left:994px;top:270px;color:#ffffff">0.5</div>
<div style="left:0px;top:284px;width:1009px;height:1px;background:#b6ae8c"></div>
<div style="left:0px;top:285px;width:1009px;height:18px;background:#ffffff"></div>
<svg style="position:absolute;left:4px;top:290px" width="15" height="8" viewBox="0 0 15 8">
<defs><linearGradient id="ig15" x1="0" y1="0" x2="0" y2="1"><stop offset="0" stop-color="#ffffff"/><stop offset="0.45" stop-color="#f0f6fb"/><stop offset="1" stop-color="#b4d4ee"/></linearGradient></defs>
<rect x="0.5" y="0.5" width="14" height="7" rx="0.8" fill="url(#ig15)" stroke="#9c9c9c"/>
<path d="M3 5.6 Q4.4 1.2 5.8 2.4 Q6.4 3 7.2 4.6 Q8 5.7 9.3 4.4 Q10 3.6 11 3.6 H12.6" stroke="#274766" stroke-width="1.3" fill="none"/>
</svg>
<div class="t" style="left:28px;top:289px;color:#000000;transform:scaleX(0.887)">РК-БП-5№004986</div>
<div class="t" style="left:159px;top:289px;color:#000000">Ваксигрип</div>
<div class="t" style="left:266px;top:289px;color:#000000">Ваксигрип</div>
<div class="t" style="left:663px;top:289px;color:#000000">БЕЛАРУСЬ</div>
<div style="left:0px;top:303px;width:1009px;height:1px;background:#b6ae8c"></div>
<div style="left:0px;top:304px;width:1009px;height:18px;background:#ffffff"></div>
<svg style="position:absolute;left:4px;top:309px" width="15" height="8" viewBox="0 0 15 8">
<defs><linearGradient id="ig16" x1="0" y1="0" x2="0" y2="1"><stop offset="0" stop-color="#ffffff"/><stop offset="0.45" stop-color="#f0f6fb"/><stop offset="1" stop-color="#b4d4ee"/></linearGradient></defs>
<rect x="0.5" y="0.5" width="14" height="7" rx="0.8" fill="url(#ig16)" stroke="#9c9c9c"/>
<path d="M3 5.6 Q4.4 1.2 5.8 2.4 Q6.4 3 7.2 4.6 Q8 5.7 9.3 4.4 Q10 3.6 11 3.6 H12.6" stroke="#274766" stroke-width="1.3" fill="none"/>
</svg>
<div class="t" style="left:28px;top:308px;color:#000000;transform:scaleX(0.887)">РК-БП-5№004987</div>
<div class="t" style="left:159px;top:308px;color:#000000">Ваксигрип (инакт...</div>
<div class="t" style="left:266px;top:308px;color:#000000">Ваксигрип (инактивир...</div>
<div class="t" style="left:400px;top:308px;color:#000000;transform:scaleX(0.889)">Санофи Пастер С.А.</div>
<div class="t" style="left:663px;top:308px;color:#000000">ФРАНЦИЯ</div>
<div class="t" style="left:765px;top:308px;color:#000000">Нет данных</div>
<div class="t" style="left:874px;top:308px;color:#000000">Суспензия для внут...</div>
<div class="t" style="left:994px;top:308px;color:#000000">0,2</div>
<div style="left:0px;top:322px;width:1009px;height:1px;background:#b6ae8c"></div>
<div style="left:0px;top:323px;width:1009px;height:18px;background:#ffffff"></div>
<svg style="position:absolute;left:4px;top:328px" width="15" height="8" viewBox="0 0 15 8">
<defs><linearGradient id="ig17" x1="0" y1="0" x2="0" y2="1"><stop offset="0" stop-color="#ffffff"/><stop offset="0.45" stop-color="#f0f6fb"/><stop offset="1" stop-color="#b4d4ee"/></linearGradient></defs>
<rect x="0.5" y="0.5" width="14" height="7" rx="0.8" fill="url(#ig17)" stroke="#9c9c9c"/>
<path d="M3 5.6 Q4.4 1.2 5.8 2.4 Q6.4 3 7.2 4.6 Q8 5.7 9.3 4.4 Q10 3.6 11 3.6 H12.6" stroke="#274766" stroke-width="1.3" fill="none"/>
</svg>
<div class="t" style="left:28px;top:327px;color:#000000;transform:scaleX(0.887)">РК-БП-5№004996</div>
<div class="t" style="left:159px;top:327px;color:#000000">Полио Сабин<span class="tm">™</span> , т...</div>
<div class="t" style="left:266px;top:327px;color:#000000">Полио Сабин<span class="tm">™</span> , трехв...</div>
<div class="t" style="left:400px;top:327px;color:#000000;transform:scaleX(0.864)">GlaxoSmithKline Biologicals s.a.</div>
<div class="t" style="left:663px;top:327px;color:#000000">БЕЛЬГИЯ</div>
<div class="t" style="left:765px;top:327px;color:#000000">Нет данных</div>
<div class="t" style="left:874px;top:327px;color:#000000">Суспензия для прие...</div>
<div class="t" style="left:994px;top:327px;color:#000000">0,1</div>
<div style="left:0px;top:341px;width:1009px;height:1px;background:#b6ae8c"></div>
<div style="left:0px;top:342px;width:1009px;height:18px;background:#ffffff"></div>
<svg style="position:absolute;left:4px;top:347px" width="15" height="8" viewBox="0 0 15 8">
<defs><linearGradient id="ig18" x1="0" y1="0" x2="0" y2="1"><stop offset="0" stop-color="#ffffff"/><stop offset="0.45" stop-color="#f0f6fb"/><stop offset="1" stop-color="#b4d4ee"/></linearGradient></defs>
<rect x="0.5" y="0.5" width="14" height="7" rx="0.8" fill="url(#ig18)" stroke="#9c9c9c"/>
<path d="M3 5.6 Q4.4 1.2 5.8 2.4 Q6.4 3 7.2 4.6 Q8 5.7 9.3 4.4 Q10 3.6 11 3.6 H12.6" stroke="#274766" stroke-width="1.3" fill="none"/>
</svg>
<div class="t" style="left:28px;top:346px;color:#000000;transform:scaleX(0.887)">РК-БП-5№004997</div>
<div class="t" style="left:159px;top:346px;color:#000000">Вакцина клещев...</div>
<div class="t" style="left:266px;top:346px;color:#000000">Вакцина клещевого э...</div>
<div class="t" style="left:400px;top:346px;color:#000000">Предприятие по производству бактерийных и в...</div>
<div class="t" style="left:663px;top:346px;color:#000000">РОССИЯ</div>
<div class="t" style="left:765px;top:346px;color:#000000">Нет данных</div>
<div class="t" style="left:874px;top:346px;color:#000000">Лиофилизат для пр...</div>
<div class="t" style="left:994px;top:346px;color:#000000">0.5</div>
<div style="left:0px;top:360px;width:1009px;height:1px;background:#b6ae8c"></div>
<div style="left:0px;top:361px;width:1009px;height:18px;background:#ffffff"></div>
<svg style="position:absolute;left:4px;top:366px" width="15" height="8" viewBox="0 0 15 8">
<defs><linearGradient id="ig19" x1="0" y1="0" x2="0" y2="1"><stop offset="0" stop-color="#ffffff"/><stop offset="0.45" stop-color="#f0f6fb"/><stop offset="1" stop-color="#b4d4ee"/></linearGradient></defs>
<rect x="0.5" y="0.5" width="14" height="7" rx="0.8" fill="url(#ig19)" stroke="#9c9c9c"/>
<path d="M3 5.6 Q4.4 1.2 5.8 2.4 Q6.4 3 7.2 4.6 Q8 5.7 9.3 4.4 Q10 3.6 11 3.6 H12.6" stroke="#274766" stroke-width="1.3" fill="none"/>
</svg>
<div class="t" style="left:28px;top:365px;color:#000000;transform:scaleX(0.887)">РК-БП-5№005152</div>
<div class="t" style="left:159px;top:365px;color:#000000">КОКАВ, вакцина ...</div>
<div class="t" style="left:266px;top:365px;color:#000000">КОКАВ, вакцина антир...</div>
<div class="t" style="left:400px;top:365px;color:#000000">Микроген Минздравсоцразвития России  НПО ...</div>
<div class="t" style="left:663px;top:365px;color:#000000">РОССИЯ</div>
<div class="t" style="left:765px;top:365px;color:#000000">Нет данных</div>
<div class="t" style="left:874px;top:365px;color:#000000">Лиофилизат для пр...</div>
<div class="t" style="left:994px;top:365px;color:#000000">2.5</div>
<div style="left:0px;top:379px;width:1009px;height:1px;background:#b6ae8c"></div>
<div style="left:0px;top:266px;width:1009px;height:18px;border:1px dotted #d8b848;box-sizing:border-box"></div>
</div>
<div style="left:36px;top:80px;width:1px;height:397px;background:#b6ae8c"></div>
<div style="left:167px;top:80px;width:1px;height:397px;background:#b6ae8c"></div>
<div style="left:274px;top:80px;width:1px;height:397px;background:#b6ae8c"></div>
<div style="left:408px;top:80px;width:1px;height:397px;background:#b6ae8c"></div>
<div style="left:671px;top:80px;width:1px;height:397px;background:#b6ae8c"></div>
<div style="left:773px;top:80px;width:1px;height:397px;background:#b6ae8c"></div>
<div style="left:882px;top:80px;width:1px;height:397px;background:#b6ae8c"></div>
<div style="left:1002px;top:80px;width:1px;height:397px;background:#b6ae8c"></div>
<div style="left:13px;top:100px;width:1009px;height:1px;background:#b6ae8c"></div>
<div class="t" style="left:41px;top:84px;color:#241e12">Регистрационный ном...</div>
<div class="t" style="left:172px;top:84px;color:#241e12">Наименование</div>
<div class="t" style="left:279px;top:84px;color:#241e12">Торговое название</div>
<div class="t" style="left:413px;top:84px;color:#241e12">Производитель</div>
<div class="t" style="left:676px;top:84px;color:#241e12">Страна</div>
<div class="t" style="left:778px;top:84px;color:#241e12">МНН</div>
<div class="t" style="left:887px;top:84px;color:#241e12">Лекарственная фор...</div>
<div class="t" style="left:1007px;top:84px;color:#241e12">До</div>
<div style="left:12px;top:79px;width:1026px;height:415px;border:1px solid #b6ae8c;box-sizing:border-box"></div>
<div style="left:1022px;top:80px;width:15px;height:397px;background:#fffdf4"></div>
<div style="left:1023px;top:81px;width:13px;height:18px;border:1px solid #efe6c4;box-sizing:border-box;background:linear-gradient(#ede9e1,#e2ddd3)"></div>
<svg style="position:absolute;left:1025px;top:86px" width="9" height="6"><path d="M1 5 L4.5 1.5 L8 5" stroke="#a89a70" stroke-width="1.4" fill="none"/></svg>
<div style="left:1023px;top:271px;width:13px;height:14px;border:1px solid #efe6c4;box-sizing:border-box;background:linear-gradient(#ede9e1,#e2ddd3)"></div>
<div style="left:1023px;top:458px;width:13px;height:18px;border:1px solid #efe6c4;box-sizing:border-box;background:linear-gradient(#ede9e1,#e2ddd3)"></div>
<svg style="position:absolute;left:1025px;top:464px" width="9" height="6"><path d="M1 1 L4.5 4.5 L8 1" stroke="#a89a70" stroke-width="1.4" fill="none"/></svg>
<div style="left:13px;top:477px;width:1009px;height:1px;background:#ebe7da"></div>
<div style="left:13px;top:478px;width:1009px;height:15px;background:#fffdf4"></div>
<div style="left:14px;top:479px;width:18px;height:13px;border:1px solid #efe6c4;box-sizing:border-box;background:linear-gradient(#ede9e1,#e2ddd3)"></div>
<svg style="position:absolute;left:20px;top:481px" width="6" height="9"><path d="M5 1 L1.5 4.5 L5 8" stroke="#a89a70" stroke-width="1.4" fill="none"/></svg>
<div style="left:33px;top:479px;width:847px;height:13px;border:1px solid #efe6c4;box-sizing:border-box;background:linear-gradient(#ede9e1,#e2ddd3)"></div>
<div style="left:1002px;top:479px;width:18px;height:13px;border:1px solid #efe6c4;box-sizing:border-box;background:linear-gradient(#ede9e1,#e2ddd3)"></div>
<svg style="position:absolute;left:1008px;top:481px" width="6" height="9"><path d="M1 1 L4.5 4.5 L1 8" stroke="#a89a70" stroke-width="1.4" fill="none"/></svg>
<div style="left:1021px;top:477px;width:16px;height:16px;background:#d6d1c3"></div>
<div style="left:341px;top:257px;width:325px;height:108px;background:#c8c8c8"></div>
<div style="left:341px;top:257px;width:1px;height:108px;background:#f0f0f0"></div>
<div style="left:341px;top:257px;width:325px;height:1px;background:#f0f0f0"></div>
<div style="left:665px;top:257px;width:1px;height:108px;background:#8a8a8a"></div>
<div style="left:341px;top:364px;width:325px;height:1px;background:#8a8a8a"></div>
<div class="tb" style="left:350px;top:262px;font-weight:bold;font-size:11px;letter-spacing:0.45px;color:#2a2a34;line-height:14px;transform:scaleY(1.1);transform-origin:0 11px">Выберите данные для заполнения</div>
<svg style="position:absolute;left:647px;top:263px" width="11" height="11" viewBox="0 0 11 11"><path d="M1.5 1.5 L9.5 9.5 M9.5 1.5 L1.5 9.5" stroke="#2a2a2a" stroke-width="2"/></svg>
<div style="left:345px;top:278px;width:317px;height:58px;background:#fffbef"></div>
<div style="left:345px;top:336px;width:317px;height:1px;background:#b4aa84"></div>
<div style="left:345px;top:337px;width:317px;height:24px;background:#ebe6db"></div>
<div class="t" style="left:353px;top:290px;color:#1e1a10">Единица измерения:</div>
<div class="t" style="left:353px;top:313px;color:#1e1a10">Вид номенклатуры:</div>
<div style="left:462px;top:284px;width:193px;height:20px;border:2px solid #ff0000;box-sizing:border-box;background:#fff"></div>
<div style="left:623px;top:286px;width:15px;height:16px;background:#ebe6db;border-left:1px solid #c8bf9f;box-sizing:border-box"></div>
<div style="left:638px;top:286px;width:15px;height:16px;background:#ebe6db;border-left:1px solid #c8bf9f;box-sizing:border-box"></div>
<div style="left:626px;top:299px;width:2px;height:2px;background:#5a4a14"></div><div style="left:630px;top:299px;width:2px;height:2px;background:#5a4a14"></div><div style="left:634px;top:299px;width:2px;height:2px;background:#5a4a14"></div>
<svg style="position:absolute;left:641px;top:291px" width="10" height="9" viewBox="0 0 10 9"><path d="M1.5 1 L8.5 8 M8.5 1 L1.5 8" stroke="#5a4812" stroke-width="1.7"/></svg>
<div class="t" style="left:465px;top:290px;color:#000">ампул</div>
<div style="left:462px;top:309px;width:193px;height:19px;border:2px solid #ff0000;box-sizing:border-box;background:#fff"></div>
<div style="left:623px;top:311px;width:15px;height:15px;background:#ebe6db;border-left:1px solid #c8bf9f;box-sizing:border-box"></div>
<div style="left:638px;top:311px;width:15px;height:15px;background:#ebe6db;border-left:1px solid #c8bf9f;box-sizing:border-box"></div>
<div style="left:626px;top:322px;width:2px;height:2px;background:#5a4a14"></div><div style="left:630px;top:322px;width:2px;height:2px;background:#5a4a14"></div><div style="left:634px;top:322px;width:2px;height:2px;background:#5a4a14"></div>
<svg style="position:absolute;left:641px;top:314px" width="10" height="9" viewBox="0 0 10 9"><path d="M1.5 1 L8.5 8 M8.5 1 L1.5 8" stroke="#5a4812" stroke-width="1.7"/></svg>
<div style="left:464px;top:311px;width:158px;height:15px;background:#4f62be;outline:1px dotted #000;outline-offset:-1px"></div>
<div class="t" style="left:466px;top:313px;color:#fff">Лекарственные средства</div>
<div class="tb" style="left:568px;top:342px;font-weight:bold;font-size:13px;color:#2a2418;line-height:14px">ОК</div>
<svg style="position:absolute;left:597px;top:344px" width="10" height="10" viewBox="0 0 10 10"><path d="M1.6 1.6 L8.4 8.4 M8.4 1.6 L1.6 8.4" stroke="#3a7fc0" stroke-width="2.3" stroke-linecap="round"/><path d="M1.8 1.8 L8.2 8.2 M8.2 1.8 L1.8 8.2" stroke="#7ab4e4" stroke-width="0.8" stroke-linecap="round"/></svg>
<div class="t" style="left:612px;top:343px;color:#1e1a10">Закрыть</div>
</body></html>
